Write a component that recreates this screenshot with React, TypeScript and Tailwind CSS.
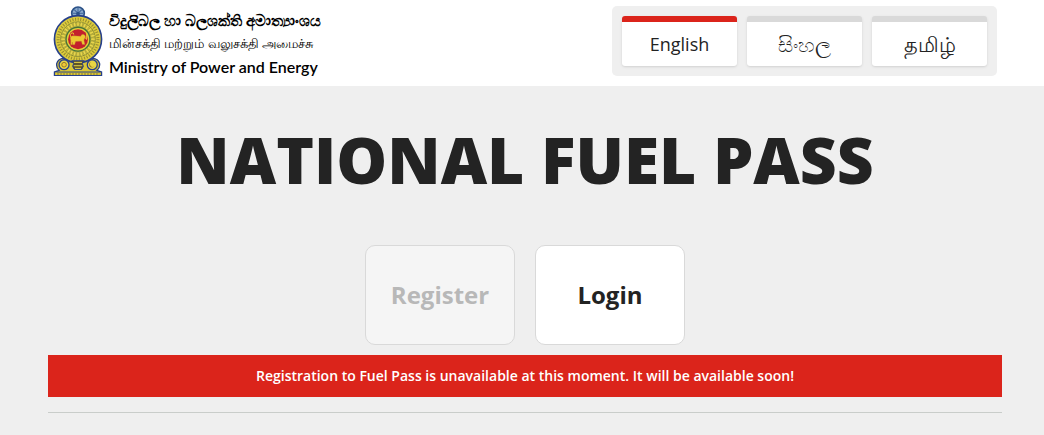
import { useState } from "react";

const languages = [
  { code: "en", label: "English", size: "text-lg font-normal" },
  { code: "si", label: "සිංහල", size: "text-[21px] font-light" },
  { code: "ta", label: "தமிழ்", size: "text-[21px] font-light" },
];

const petals = Array.from({ length: 28 }, (_, i) => (i * 360) / 28);
const spokes = Array.from({ length: 8 }, (_, i) => i * 45);

// state emblem: wheel on top, lion in the middle, sun and moon on the base
const Emblem = () => (
  <svg viewBox="26 17 150 211" className="w-[50px] h-[70px] shrink-0" aria-hidden="true">
    {/* base */}
    <path
      d="M30 227 V216 L44 211 Q35 203 37 190 Q41 176 58 174 L144 174 Q162 176 166 190 Q168 203 158 211 L172 216 V227 Z"
      fill="#d9c736"
      stroke="#27408b"
      strokeWidth="4"
    />
    {/* wheel */}
    <circle cx="101" cy="39" r="19" fill="#8aa9cc" stroke="#2c5288" strokeWidth="5" />
    {spokes.map((angle) => (
      <path key={angle} d="M101 39 V23" stroke="#3f669a" strokeWidth="3" transform={`rotate(${angle} 101 39)`} />
    ))}
    <circle cx="101" cy="39" r="5" fill="#2c5288" />
    {/* outer rings */}
    <circle cx="101" cy="117" r="71" fill="#dccb3c" stroke="#27408b" strokeWidth="5" />
    <circle cx="101" cy="117" r="60" fill="none" stroke="#948a30" strokeWidth="9" strokeDasharray="3 5" />
    <circle cx="101" cy="117" r="52" fill="#d6c63a" stroke="#5c6b32" strokeWidth="2" />
    {petals.map((angle) => (
      <ellipse
        key={angle}
        cx="101"
        cy="72"
        rx="4"
        ry="8"
        fill="#e8d64b"
        stroke="#8a8734"
        strokeWidth="1.5"
        transform={`rotate(${angle} 101 117)`}
      />
    ))}
    <circle cx="101" cy="117" r="36" fill="#e3cf3b" stroke="#43723a" strokeWidth="4" />
    <circle cx="101" cy="117" r="30" fill="#c4202c" />
    {/* lion */}
    <path
      d="M79 134 V121 Q76 116 79 110 Q83 105 90 107 L109 108 Q112 100 119 103 L124 108 L121 114 L119 120 L122 133 H114 L111 123 L94 124 L91 134 H85 L84 126 V134 Z"
      fill="#edc832"
      stroke="#b5702a"
      strokeWidth="1"
    />
    <path d="M80 112 Q75 101 83 98 Q89 97 88 103 M119 112 L127 115 M127 119 V98" fill="none" stroke="#edc832" strokeWidth="3" />
    {/* vase between sun and moon */}
    <path d="M82 182 H120 L114 190 Q121 199 112 208 H90 Q81 199 88 190 Z" fill="#5d5427" stroke="#27408b" strokeWidth="3" />
    <path d="M89 187 H113 M88 197 H114 M92 205 H110" stroke="#e5d348" strokeWidth="3" />
    <circle cx="59" cy="194" r="15" fill="#e8d544" stroke="#27408b" strokeWidth="4" />
    <circle cx="59" cy="194" r="7" fill="#efc83a" stroke="#94782b" strokeWidth="3" />
    <circle cx="144" cy="194" r="15" fill="#e8d544" stroke="#27408b" strokeWidth="4" />
    <path d="M140 185 A9 9 0 1 0 151 198 A8 8 0 0 1 140 185 Z" fill="#94782b" />
    <path d="M36 216 H167" stroke="#27408b" strokeWidth="3" />
    <path d="M38 222 H165" stroke="#837730" strokeWidth="3" strokeDasharray="6 3" />
  </svg>
);

const App = () => {
  const [language, setLanguage] = useState<string>("en");

  return (
    <div className="min-h-svh bg-[#efefef] font-['Open_Sans','Noto_Sans',sans-serif] text-[#232323]">
      <header className="bg-white flex items-start justify-between pt-1.5 pb-2 pl-[53px] pr-[47px]">
        <div className="flex items-start gap-1.5">
          <Emblem />
          <div className="flex flex-col pt-[3px] text-black whitespace-nowrap">
            <p lang="si" className="text-[15px] leading-[23px] font-bold">
              විදුලිබල හා බලශක්ති අමාත්‍යාංශය
            </p>
            <p lang="ta" className="text-[13px] leading-[23px] font-medium">
              மின்சக்தி மற்றும் வலுசக்தி அமைச்சு
            </p>
            <p className="font-[Lato,sans-serif] text-[16px] leading-[23px] font-semibold">
              Ministry of Power and Energy
            </p>
          </div>
        </div>

        <nav className="flex gap-2.5 p-2.5 rounded-[5px] bg-[#efefef]">
          {languages.map(({ code, label, size }) => (
            <button
              key={code}
              type="button"
              lang={code}
              onClick={() => setLanguage(code)}
              className={`w-[115px] h-[50px] rounded-[3px] border-t-6 bg-white leading-6 shadow-sm ${size} ${
                language === code ? "border-[#db241b]" : "border-[#d9d9d9]"
              }`}
            >
              {label}
            </button>
          ))}
        </nav>
      </header>

      <main className="pl-12 pr-[42px] pt-[30px]">
        <h1 className="text-center text-[64px] leading-[88px] font-extrabold">NATIONAL FUEL PASS</h1>

        <div className="flex justify-center gap-5 mt-[41px]">
          <button
            type="button"
            disabled
            className="w-[150px] h-[100px] rounded-[10px] border border-[#d9d9d9] bg-[#f5f5f5] text-2xl font-bold text-[#b8b8b8]"
          >
            Register
          </button>
          <button
            type="button"
            className="w-[150px] h-[100px] rounded-[10px] border border-[#d9d9d9] bg-white text-2xl font-bold"
          >
            Login
          </button>
        </div>

        <p className="mt-2.5 bg-[#db241b] text-white text-center text-sm leading-[42px] font-semibold">
          Registration to Fuel Pass is unavailable at this moment. It will be available soon!
        </p>
        <hr className="mt-[15px] border-[#c9cdca]" />
      </main>
    </div>
  );
};

export default App;
